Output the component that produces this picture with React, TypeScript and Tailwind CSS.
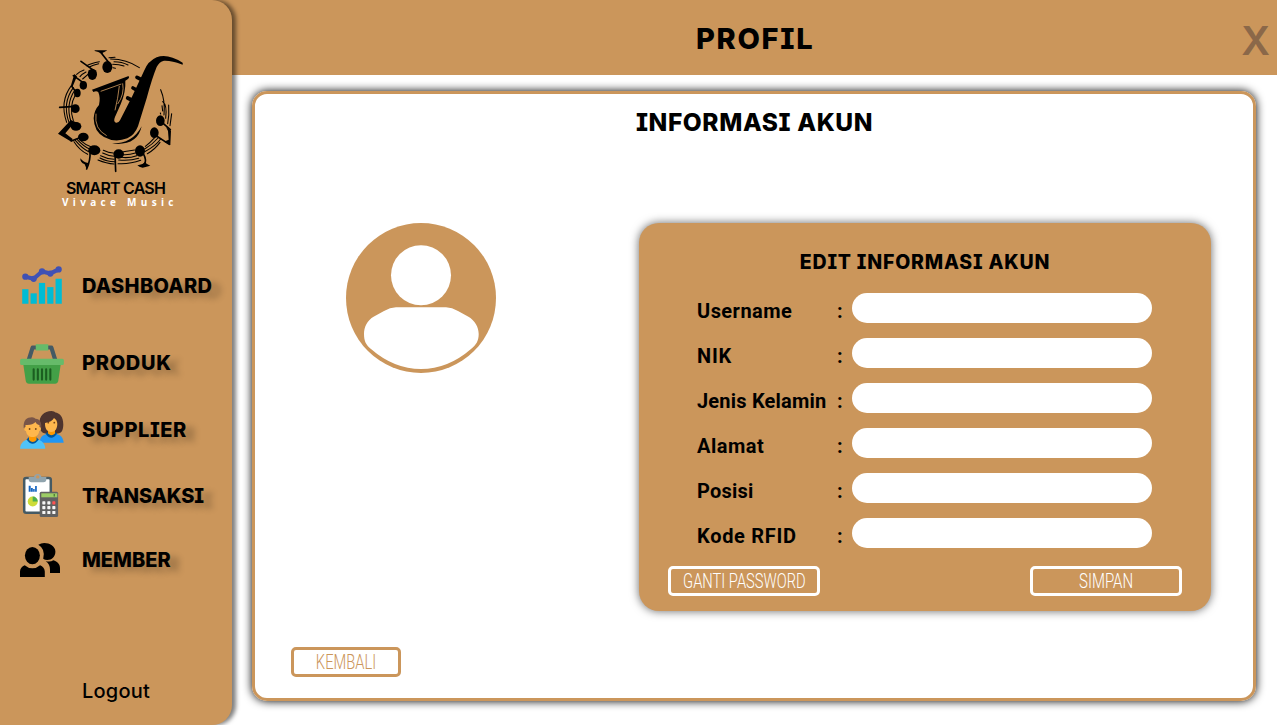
import type { ReactNode } from "react";
import { FcComboChart } from "react-icons/fc";

const heading = "font-[Inter,sans-serif] font-extrabold [font-feature-settings:'cv08'] whitespace-nowrap";

function Staff({ d }: { d: string }) {
  return <path d={d} fill="none" stroke="#000" strokeWidth="3.2" strokeLinecap="round" />;
}

function SaxLogo() {
  return (
    <svg className="shrink-0" width="160" height="145" viewBox="0 0 480 435">
      <Staff d="M212 72Q260 72 298 98M222 80Q246 80 264 90M218 88Q238 88 252 93M207 68L225 67M219 98L226 100" />
      <Staff d="M178 80Q154 84 140 92M176 86Q158 90 148 96M132 105Q118 110 110 118M138 111Q126 117 120 125M144 118L128 132" />
      <Staff d="M94 152Q58 200 80 262M100 158Q66 205 87 262M104 166Q76 210 93 260M106 180Q86 215 100 257" />
      <Staff d="M102 320Q118 345 143 358M106 316Q126 340 146 350M112 314Q130 334 150 343M118 314Q136 330 156 337" />
      <Staff d="M180 369Q200 380 224 380M182 362Q202 372 222 373M188 354Q204 362 222 364M190 346Q206 354 220 354M174 375Q200 386 222 387" />
      <Staff d="M250 350L284 345M250 359Q268 360 286 354M244 367Q268 370 290 362M236 375Q270 378 296 370M234 386Q270 388 302 376" />
      <Staff d="M316 334Q332 322 344 308M314 342Q338 328 354 309M314 350Q346 334 362 312M322 356Q344 344 360 322" />
      <Staff d="M362 164Q376 196 372 240M368 200Q382 210 377 250M386 210Q388 240 383 266M395 236L390 272M366 212L368 228M361 234L362 237" />
      <g>
        <ellipse cx="202" cy="96" rx="15" ry="18" />
        <ellipse cx="157" cy="118" rx="14" ry="17" />
        <ellipse cx="130" cy="151" rx="11" ry="13" />
        <ellipse cx="112" cy="174" rx="10" ry="13" />
        <ellipse cx="106" cy="221" rx="13" ry="13" />
        <ellipse cx="108" cy="274" rx="16" ry="13" />
        <ellipse cx="130" cy="306" rx="16" ry="13" />
        <ellipse cx="163" cy="346" rx="18" ry="15" />
        <ellipse cx="236" cy="357" rx="16" ry="14" />
        <ellipse cx="300" cy="348" rx="15" ry="17" />
        <ellipse cx="343" cy="293" rx="13" ry="16" />
        <ellipse cx="361" cy="257" rx="13" ry="16" />
      </g>
      <g fill="none" stroke="#000" strokeWidth="5" strokeLinecap="round" strokeLinejoin="round">
        <path d="M212 90L184 54M166 110L123 79M100 122L137 148M95 154L106 168M104 214L59 217M225 356L227 409M310 356Q322 378 312 390M150 352Q152 374 140 402M92 258L114 266M94 318L134 302M345 300L388 328M391 284L366 262" />
      </g>
      <path d="M164 46H202L192 52Q184 52 190 62L184 56Q176 50 164 48ZM103 117L111 124L97 157L93 151ZM54 296L92 256L104 262L76 295L98 312L94 320ZM378 276L393 287L391 330L372 320L386 314L384 288ZM140 402L134 388Q120 382 121 370Q130 382 145 384ZM331 392L308 398Q296 396 292 390Q306 392 314 382Q320 388 331 392Z" />
      <path d="M156 164L264 124Q268 123 267 128L264 132L256 137Q258 170 242 208L225 246Q219 260 228 263Q236 264 240 256L276 185L312 108Q324 78 350 67Q382 54 428 83Q430 92 424 88Q396 76 372 77Q358 80 350 96Q336 130 320 190L294 274Q284 300 262 310Q224 324 192 306Q162 290 161 250Q162 226 177 210Q182 188 175 172Q170 166 160 171Z" />
      <path d="M248 145Q254 178 233 207M238 153Q234 190 225 226M168 236Q162 282 200 302" fill="none" stroke="#cb965b" strokeWidth="2.5" />
      <path d="M182 169L244 147" fill="none" stroke="#cb965b" strokeWidth="2.5" />
      <path d="M291 127L309 136M279 159L297 169M263 189L281 198" stroke="#000" strokeWidth="11" strokeLinecap="round" />
      <path d="M305 274Q292 334 216 326Q278 326 305 274Z" />
    </svg>
  );
}

function BasketIcon() {
  return (
    <svg width="50" height="50" viewBox="0 0 48 48">
      <path d="M11 20L15 7.200H33L37 20" fill="none" stroke="#455A64" strokeWidth="4" strokeLinejoin="round" />
      <path d="M42 23H6l2.4 16.4c.3 1.5 1.5 2.6 3 2.6h25.2c1.5 0 2.7-1.1 3-2.6z" fill="#43A047" />
      <path d="M18 4h12v6H18zM4.500 18h39q1.500 0 1.500 1.500v3q0 1.500-1.500 1.500h-39q-1.500 0-1.500-1.500v-3q0-1.500 1.500-1.500z" fill="#66BB6A" />
      <path d="M16 28v10M20 28v10M24 28v10M28 28v10M32 28v10" stroke="#1B5E20" strokeWidth="2" strokeLinecap="round" />
    </svg>
  );
}

function PeopleIcon() {
  return (
    <svg width="50" height="50" viewBox="0 0 50 50">
      <path d="M34.500 6C27 6 22.300 11 22.300 19c0 5 2 9.500 6.500 9.500h12c4 0 5.500-4 5.500-9C46.300 11 42 8 38.500 7.500Q37.500 6 34.500 6z" fill="#4E342E" />
      <path d="M22.500 37.700C23 31 27 28.500 34.500 28.500S46 31 46.700 37.700z" fill="#2196F3" />
      <path d="M28.500 28.500Q34 37 40.300 28.500L38 27H31z" fill="#01579B" />
      <path d="M31 24h7v4.500q-3.500 3.500-7 0z" fill="#FF9800" />
      <path d="M28 18q7-1 9-5 3.300 2 3.300 6c0 5-2.500 8-6.100 8S28 24 28 19z" fill="#FFB74D" />
      <path d="M3 43.700C3.500 37 8 34 15.600 34S27.800 37 28.300 43.700z" fill="#4FC3F7" />
      <path d="M9.500 34.500Q15.500 43 21.800 34.500L19 32h-7z" fill="#01579B" />
      <path d="M12 29h7.500v6q-3.700 4-7.500 0z" fill="#FF9800" />
      <path d="M6.700 23C6 15 10 12.300 15 12.300q2.500 0 3.500 1.500c4.500 0 6.300 4 5.700 9.200l-2 2H9z" fill="#795548" />
      <path d="M8.500 20q7 .5 10-3 1 3 4 3.300v1.700q1.500 0 1.500 2t-1.800 2C21.700 30 19 32 15.600 32S9.500 30 9 26q-1.800 0-1.800-2t1.300-2z" fill="#FFB74D" />
      <g fill="#784719"><circle cx="12.600" cy="24" r=".9" /><circle cx="18.800" cy="24" r=".9" /><circle cx="31.300" cy="17.700" r=".9" /><circle cx="37.300" cy="17.700" r=".9" /></g>
    </svg>
  );
}

function ReportIcon() {
  return (
    <svg width="50" height="50" viewBox="0 0 50 50">
      <rect x="7.200" y="8" width="26.600" height="34.700" rx="2" fill="#fff" stroke="#455A64" strokeWidth="2.500" />
      <path d="M11.700 7h5.300a3.800 3.800 0 0 1 7.400 0h4.900v2.500q0 2.800-2.800 2.800h-12q-2.800 0-2.800-2.800z" fill="#90A4AE" />
      <circle cx="20.700" cy="6.900" r="1.700" fill="#cb965b" />
      <path d="M11.700 15.700h2v6h-2zM14 18h1.800v3.700H14zM16.100 19h1.600v2.700h-1.600zM18.100 16h1.700v5.700h-1.700z" fill="#1565C0" />
      <circle cx="15.700" cy="31.500" r="5" fill="#CDDC39" />
      <path d="M15.700 31.500v-5a5 5 0 0 1 5 5z" fill="#4CAF50" />
      <rect x="22.700" y="21.700" width="18.400" height="25.300" rx="1.500" fill="#616161" />
      <path d="M24.300 23.300h16v4h-16z" fill="#9CCC65" />
      <path d="M36.700 24h1v2.500h-1z" fill="#33691E" />
      {[31.3, 36.1, 40.9].map((y) => [25.3, 30.3, 35.3].map((x) => (
        <rect key={`${x}-${y}`} x={x} y={y} width="3.1" height="3.1" rx=".6" fill={x > 35 && y < 32 ? "#FF5252" : "#F5F5F5"} />
      )))}
    </svg>
  );
}

function MembersIcon() {
  return (
    <svg width="50" height="50" viewBox="0 0 50 50">
      <ellipse cx="15.400" cy="20.600" rx="7.500" ry="8.600" />
      <path d="M3 42v-5.500c0-2.800 2-5.300 4.700-6.200q3.300 3 7.700 3t7.700-3c2.700.9 4.700 3.400 4.700 6.200V42z" />
      <path d="M21.300 9.700Q24 8 27.300 8C32.500 8 38.400 11.200 38.400 16.500S34.800 25 30.300 25q-2.500 0-4.100-1.200 1.500-4.300-.2-8.800-1.500-3.500-4.700-5.300z" />
      <path d="M33 38v-3.500q0-5.500-4.300-8.300 5 1 7.600-.9C40.500 26.700 43 29 43 33v5z" />
    </svg>
  );
}

const menu: { label: string; icon: ReactNode; row: string; text: string }[] = [
  { label: "DASHBOARD", icon: <FcComboChart size={50} />, row: "mb-[30px]", text: "mt-[2px] tracking-[0.3px]" },
  { label: "PRODUK", icon: <BasketIcon />, row: "mb-[15px]", text: "-mt-[4px] tracking-[0.7px]" },
  { label: "SUPPLIER", icon: <PeopleIcon />, row: "mb-[15px]", text: "tracking-[0.55px]" },
  { label: "TRANSAKSI", icon: <ReportIcon />, row: "mb-[15px]", text: "mt-[2px] tracking-[-0.15px]" },
  { label: "MEMBER", icon: <MembersIcon />, row: "", text: "tracking-[0px]" },
];

const fields = [
  { label: "Username", track: "tracking-[0.45px]" },
  { label: "NIK", track: "tracking-[0.8px]" },
  { label: "Jenis Kelamin", track: "tracking-[0.2px]" },
  { label: "Alamat", track: "tracking-[0.5px]" },
  { label: "Posisi", track: "tracking-[0.2px]" },
  { label: "Kode RFID", track: "tracking-[0.7px]" },
];

function OutlineButton({ label, className, text }: { label: string; className: string; text: string }) {
  return (
    <button className={`flex h-[30px] items-center justify-center rounded-[5px] border-[3px] font-[Roboto,sans-serif] text-[20px] leading-none font-light whitespace-nowrap ${className}`}>
      <span className={`inline-block ${text}`}>{label}</span>
    </button>
  );
}

function Sidebar() {
  return (
    <aside className="relative z-10 flex h-full w-[232px] shrink-0 flex-col rounded-r-[20px] bg-[#cb965b] shadow-[4px_0_4px_rgba(0,0,0,0.5)]">
      <div className="mt-[35px] ml-[40px] flex h-[180px] w-[160px] flex-col">
        <SaxLogo />
        <div className="ml-[26px] font-[Inter,sans-serif] text-[16px] leading-[17px] font-semibold tracking-[-0.8px] whitespace-nowrap">SMART CASH</div>
        <div className="mt-[2px] ml-[22px] font-['Open_Sans',sans-serif] text-[10px] leading-[6px] font-bold tracking-[4.3px] whitespace-nowrap text-white">Vivace Music</div>
      </div>
      <nav className="mt-[45px] ml-[17px] flex flex-col">
        {menu.map((m) => (
          <a key={m.label} className={`flex h-[50px] items-center gap-[15px] ${m.row}`}>
            <span className="size-[50px] shrink-0">{m.icon}</span>
            <span className={`${heading} text-[20px] leading-[24px] [text-shadow:9px_5px_6px_rgba(0,0,0,0.25)] ${m.text}`}>{m.label}</span>
          </a>
        ))}
      </nav>
      <a className="mt-auto mb-[21px] ml-[82px] font-[Inter,sans-serif] text-[20px] leading-[26px] font-medium tracking-[0.2px]">Logout</a>
    </aside>
  );
}

export default function App() {
  return (
    <div className="flex h-[725px] w-[1277px] overflow-hidden bg-white text-black">
      <Sidebar />
      <main className="-ml-[20px] flex grow flex-col">
        <header className="flex h-[75px] items-center bg-[#cb965b] pl-[20px]">
          <h1 className={`${heading} mt-[2px] ml-[37px] grow text-center text-[29px] leading-[36px] tracking-[1.7px]`}>PROFIL</h1>
          <button className="mt-[6px] mr-[7px] font-[Inter,sans-serif] text-[40px] leading-[48px] font-semibold text-[#8b6849]">X</button>
        </header>
        <section className="mt-[16px] mr-[21px] ml-[40px] flex h-[610px] flex-col rounded-[15px] border-[3px] border-[#cb965b] shadow-[0_0_10px_#000]">
          <h2 className={`${heading} mt-[13px] pl-px text-center text-[24.5px] leading-[30px] tracking-[0.6px]`}>INFORMASI AKUN</h2>
          <div className="mt-[86px] flex items-start justify-between pr-[42px] pl-[91px]">
            <svg width="150" height="150" viewBox="0 0 150 150">
              <circle cx="75" cy="75" r="75" fill="#cb965b" />
              <circle cx="75" cy="52.300" r="30" fill="#fff" />
              <path d="M50 84.300H100Q106 84.300 112 88L122 93.500C129 97.500 132.700 104 132.700 111C132.700 118 130 122 125 126Q102 146 75 146T25 126C20 122 18 118 18 111C18 104 21 97.500 28 93.500L38 88Q44 84.300 50 84.300Z" fill="#fff" />
            </svg>
            <form className="flex h-[388px] w-[572px] flex-col rounded-[20px] bg-[#cb965b] shadow-[0_0_10px_rgba(0,0,0,0.6)]">
              <h3 className={`${heading} mt-[27px] text-center text-[19.5px] leading-[24px] tracking-[0.8px]`}>EDIT INFORMASI AKUN</h3>
              <div className="mt-[19px] ml-[58px] flex flex-col gap-[15px]">
                {fields.map((f) => (
                  <label key={f.label} className="flex h-[30px] items-center font-[Roboto,sans-serif] text-[20px] leading-[24px] font-bold">
                    <span className={`mt-[6px] w-[140px] whitespace-nowrap ${f.track}`}>{f.label}</span>
                    <span className="mt-[6px] w-[15px]">:</span>
                    <input className="h-[30px] w-[300px] rounded-full bg-white px-4 font-normal outline-none" />
                  </label>
                ))}
              </div>
              <div className="mt-[18px] flex justify-between px-[29px]">
                <OutlineButton label="GANTI PASSWORD" className="w-[152px] border-white text-white" text="scale-x-[0.735]" />
                <OutlineButton label="SIMPAN" className="w-[152px] border-white text-white" text="scale-x-[0.75]" />
              </div>
            </form>
          </div>
          <OutlineButton label="KEMBALI" className="mt-[36px] ml-[36px] w-[110px] border-[#cb965b] text-[#cb965b]" text="scale-x-[0.735]" />
        </section>
      </main>
    </div>
  );
}
